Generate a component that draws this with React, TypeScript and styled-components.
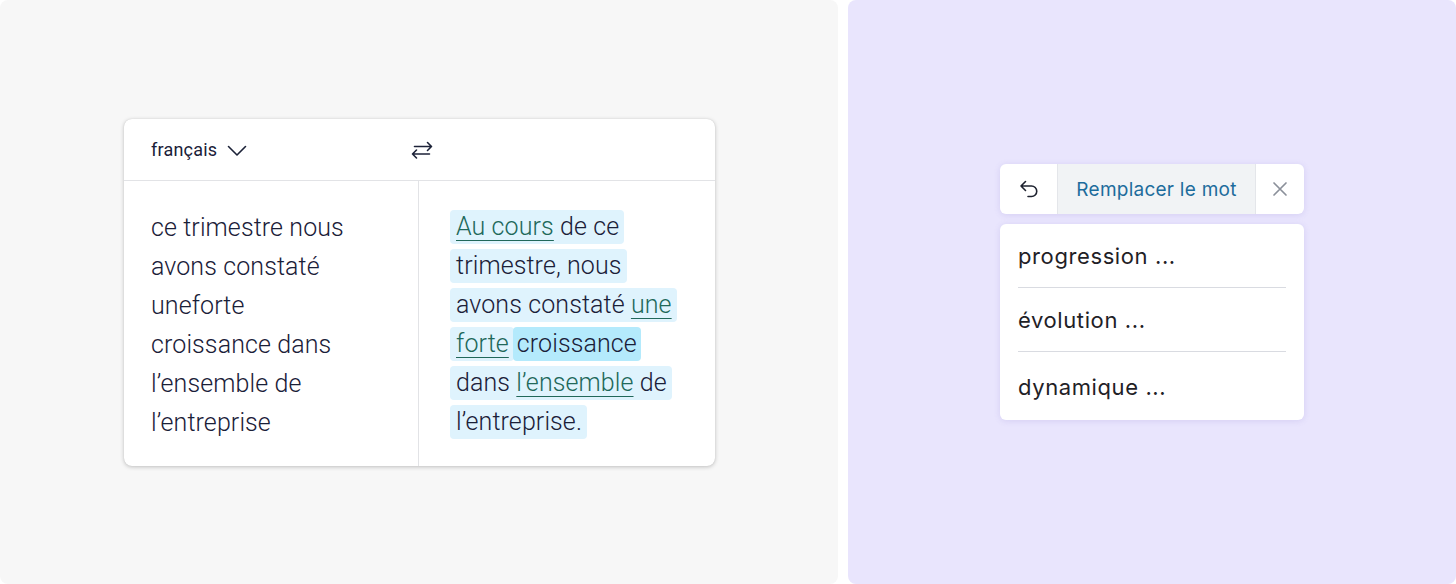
import styled, { createGlobalStyle } from "styled-components";

const GlobalStyle = createGlobalStyle`
  html, body {
    margin: 0;
    padding: 0;
    background: #ffffff;
  }
  * {
    box-sizing: border-box;
  }
`;

const sourceLines = [
  "ce trimestre nous",
  "avons constaté",
  "uneforte",
  "croissance dans",
  "l’ensemble de",
  "l’entreprise",
];

type Piece = { text: string; changed?: boolean };
type Segment = { pieces: Piece[]; strong?: boolean };

const targetLines: Segment[][] = [
  [{ pieces: [{ text: "Au cours", changed: true }, { text: " de ce" }] }],
  [{ pieces: [{ text: "trimestre, nous" }] }],
  [{ pieces: [{ text: "avons constaté " }, { text: "une", changed: true }] }],
  [
    { pieces: [{ text: "forte", changed: true }] },
    { pieces: [{ text: "croissance" }], strong: true },
  ],
  [
    {
      pieces: [
        { text: "dans " },
        { text: "l’ensemble", changed: true },
        { text: " de" },
      ],
    },
  ],
  [{ pieces: [{ text: "l’entreprise." }] }],
];

const suggestions = ["progression ...", "évolution ...", "dynamique ..."];

export default function App() {
  return (
    <>
      <GlobalStyle />
      <Page>
        <LeftPanel>
          <TranslatorCard>
            <CardHeader>
              <LanguagePicker>
                français
                <svg width="20" height="12" viewBox="0 0 20 12" fill="none">
                  <path
                    d="M1.5 1.5 10 10l8.5-8.5"
                    stroke="#1c2238"
                    strokeWidth="1.6"
                    strokeLinecap="round"
                    strokeLinejoin="round"
                  />
                </svg>
              </LanguagePicker>
              <SwapButton>
                <svg width="24" height="24" viewBox="0 0 24 24" fill="none">
                  <path
                    d="M4.5 8.5h17M17.5 4.5l4 4-4 4"
                    stroke="#1c2238"
                    strokeWidth="1.6"
                    strokeLinecap="round"
                    strokeLinejoin="round"
                  />
                  <path
                    d="M19.5 16H2.5M6.5 12l-4 4 4 4"
                    stroke="#1c2238"
                    strokeWidth="1.6"
                    strokeLinecap="round"
                    strokeLinejoin="round"
                  />
                </svg>
              </SwapButton>
            </CardHeader>
            <CardBody>
              <SourceColumn>
                {sourceLines.map((line, i) => (
                  <TextLine key={i}>{line}</TextLine>
                ))}
              </SourceColumn>
              <TargetColumn>
                {targetLines.map((segments, i) => (
                  <TextLine key={i}>
                    {segments.map((seg, j) => (
                      <Highlight key={j} $strong={seg.strong}>
                        {seg.pieces.map((p, k) =>
                          p.changed ? (
                            <Changed key={k}>{p.text}</Changed>
                          ) : (
                            <span key={k}>{p.text}</span>
                          )
                        )}
                      </Highlight>
                    ))}
                  </TextLine>
                ))}
              </TargetColumn>
            </CardBody>
          </TranslatorCard>
        </LeftPanel>

        <RightPanel>
          <Popup>
            <Toolbar>
              <ToolButton $width={57}>
                <svg width="24" height="24" viewBox="0 0 24 24" fill="none">
                  <path
                    d="M8.5 13.5 4 9l4.5-4.5M4 9h10.5a5.25 5.25 0 0 1 0 10.5H11"
                    stroke="#1f2330"
                    strokeWidth="1.6"
                    strokeLinecap="round"
                    strokeLinejoin="round"
                  />
                </svg>
              </ToolButton>
              <ReplaceLabel>Remplacer le mot</ReplaceLabel>
              <ToolButton $width={48}>
                <svg width="20" height="20" viewBox="0 0 20 20" fill="none">
                  <path
                    d="M4 4l12 12M16 4 4 16"
                    stroke="#8b909a"
                    strokeWidth="1.7"
                    strokeLinecap="round"
                  />
                </svg>
              </ToolButton>
            </Toolbar>
            <SuggestionList>
              {suggestions.map((s) => (
                <Suggestion key={s}>{s}</Suggestion>
              ))}
            </SuggestionList>
          </Popup>
        </RightPanel>
      </Page>
    </>
  );
}

const Page = styled.main`
  display: flex;
  gap: 10px;
  width: 1456px;
  height: 584px;
  overflow: hidden;
`;

const LeftPanel = styled.section`
  width: 838px;
  flex-shrink: 0;
  background: #f7f7f7;
  border-radius: 8px;
  display: flex;
  align-items: center;
  justify-content: center;
`;

const RightPanel = styled.section`
  flex: 1;
  background: #e9e5fd;
  border-radius: 8px;
  display: flex;
  align-items: center;
  justify-content: center;
`;

const TranslatorCard = styled.div`
  width: 591px;
  margin-left: 1px;
  background: #ffffff;
  border-radius: 8px;
  box-shadow: 0 1px 4px rgba(0, 0, 0, 0.22), 0 0 1px rgba(0, 0, 0, 0.15);
  display: flex;
  flex-direction: column;
  font-family: Roboto, "Liberation Sans", sans-serif;
  color: #1a2038;
`;

const CardHeader = styled.div`
  height: 62px;
  display: grid;
  grid-template-columns: 294px 1fr;
  align-items: center;
  border-bottom: 1px solid #e2e3e6;
`;

const LanguagePicker = styled.div`
  display: flex;
  align-items: center;
  gap: 10px;
  padding-left: 27px;
  font-size: 18px;
  font-weight: 400;
  letter-spacing: 0.2px;

  svg {
    margin-top: 3px;
  }
`;

const SwapButton = styled.div`
  display: flex;
  align-items: center;
  margin-left: -8px;
  padding-top: 2px;
`;

const CardBody = styled.div`
  display: grid;
  grid-template-columns: 295px 1fr;
`;

const SourceColumn = styled.div`
  padding: 27px 10px 24px 27px;
  border-right: 1px solid #e2e3e6;
  font-size: 25px;
  font-weight: 300;
  letter-spacing: 0.1px;
`;

const TargetColumn = styled.div`
  padding: 27px 10px 24px 31px;
  font-size: 25px;
  font-weight: 300;
  letter-spacing: 0.1px;
`;

const TextLine = styled.div`
  display: flex;
  align-items: center;
  height: 39px;
  white-space: pre;
`;

const Highlight = styled.span<{ $strong?: boolean }>`
  display: inline-block;
  line-height: 34px;
  padding: 0 ${(p) => (p.$strong ? "4px" : "5px")} 0
    ${(p) => (p.$strong ? "4px" : "6px")};
  border-radius: 4px;
  background: ${(p) => (p.$strong ? "#b4eafc" : "#dff3fd")};

  & + & {
    margin-left: -1px;
  }
`;

const Changed = styled.span`
  color: #21685a;
  text-decoration: underline;
  text-decoration-thickness: 1px;
  text-underline-offset: 5px;
`;

const Popup = styled.div`
  width: 304px;
  display: flex;
  flex-direction: column;
  gap: 10px;
  font-family: Inter, "Open Sans", sans-serif;
`;

const Toolbar = styled.div`
  height: 50px;
  display: flex;
  background: #ffffff;
  border-radius: 6px;
  overflow: hidden;
  box-shadow: 0 1px 6px rgba(110, 95, 190, 0.16);
`;

const ToolButton = styled.div<{ $width: number }>`
  width: ${(p) => p.$width}px;
  display: flex;
  align-items: center;
  justify-content: center;
  flex-shrink: 0;
`;

const ReplaceLabel = styled.div`
  flex: 1;
  display: flex;
  align-items: center;
  justify-content: center;
  background: #f1f3f5;
  border-left: 1px solid #e4e6ea;
  border-right: 1px solid #e4e6ea;
  color: #1d6c9c;
  font-size: 19px;
  letter-spacing: 0.25px;
  font-weight: 400;
`;

const SuggestionList = styled.ul`
  margin: 0;
  padding: 0 18px;
  list-style: none;
  background: #ffffff;
  border-radius: 6px;
  box-shadow: 0 1px 6px rgba(110, 95, 190, 0.16);
`;

const Suggestion = styled.li`
  height: 64px;
  display: flex;
  align-items: center;
  padding-top: 1px;
  font-size: 22px;
  letter-spacing: 0.6px;
  color: #1f2126;
  border-bottom: 1px solid #d9dbe1;

  &:last-child {
    border-bottom: none;
    height: 68px;
  }
`;
